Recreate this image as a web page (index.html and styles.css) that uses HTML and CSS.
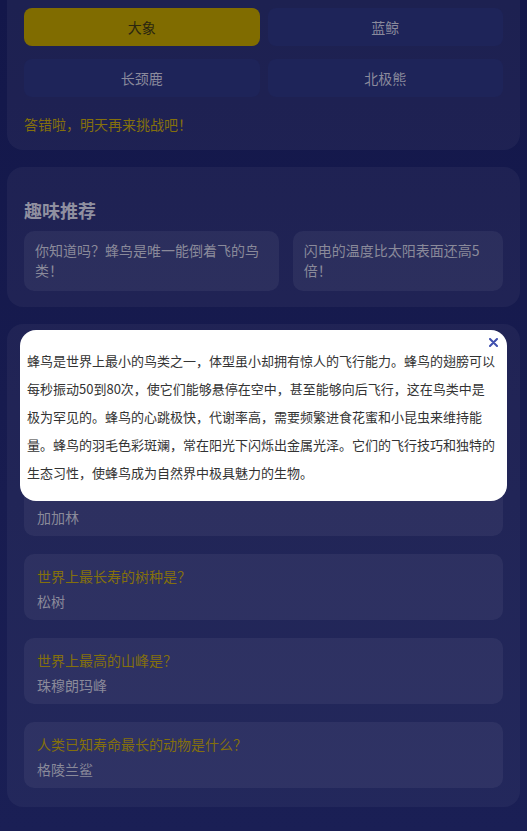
FILE: index.html
```html
<!DOCTYPE html>
<html lang="zh-CN">
<head>
    <meta charset="UTF-8">
    <meta name="viewport" content="width=device-width, initial-scale=1.0">
    <title>每日动物问答</title>
    <link rel="stylesheet" href="styles.css">
</head>
<body>
    <div class="page">
        <section class="card card-top">
            <div class="options">
                <button class="option selected">大象</button>
                <button class="option">蓝鲸</button>
                <button class="option">长颈鹿</button>
                <button class="option">北极熊</button>
            </div>
            <p class="result">答错啦，明天再来挑战吧！</p>
        </section>

        <section class="card">
            <h2 class="card-title">趣味推荐</h2>
            <div class="tips">
                <div class="tip">你知道吗？蜂鸟是唯一能倒着飞的鸟类！</div>
                <div class="tip">闪电的温度比太阳表面还高5倍！</div>
            </div>
        </section>

        <section class="card card-history">
            <h2 class="card-title tight">往期问答</h2>
            <div class="history">
                <div class="qa">
                    <p class="q">世界上最大的沙漠是？</p>
                    <p class="a">南极洲</p>
                </div>
                <div class="qa">
                    <p class="q">第一位进入太空的人是谁？</p>
                    <p class="a">加加林</p>
                </div>
                <div class="qa">
                    <p class="q">世界上最长寿的树种是？</p>
                    <p class="a">松树</p>
                </div>
                <div class="qa">
                    <p class="q">世界上最高的山峰是？</p>
                    <p class="a">珠穆朗玛峰</p>
                </div>
                <div class="qa">
                    <p class="q">人类已知寿命最长的动物是什么？</p>
                    <p class="a">格陵兰鲨</p>
                </div>
            </div>
        </section>
    </div>

    <!-- tip detail popup -->
    <div class="modal-layer">
        <div class="modal">
            <button class="modal-close" aria-label="关闭">
                <svg width="9" height="9" viewBox="0 0 9 9">
                    <path d="M1 1 L8 8 M8 1 L1 8" stroke="#3f4fae" stroke-width="2" stroke-linecap="round"/>
                </svg>
            </button>
            <p>蜂鸟是世界上最小的鸟类之一，体型虽小却拥有惊人的飞行能力。蜂鸟的翅膀可以每秒振动50到80次，使它们能够悬停在空中，甚至能够向后飞行，这在鸟类中是极为罕见的。蜂鸟的心跳极快，代谢率高，需要频繁进食花蜜和小昆虫来维持能量。蜂鸟的羽毛色彩斑斓，常在阳光下闪烁出金属光泽。它们的飞行技巧和独特的生态习性，使蜂鸟成为自然界中极具魅力的生物。</p>
        </div>
    </div>
</body>
</html>
```

FILE: styles.css
```css
body {
    margin: 0;
    min-height: 100vh;
    font-family: "Noto Sans CJK SC", "Noto Sans", sans-serif;
    background: linear-gradient(180deg, #13174a 0%, #181c50 60%, #1a1f55 100%);
}
.page {
    padding: 0 7px;
}
.card {
    background-color: rgba(255, 255, 255, 0.045);
    border-radius: 16px;
    padding: 17px 17px 16px;
    margin-bottom: 17px;
}
.card-top {
    padding-top: 8px;
    border-radius: 0 0 16px 16px;
}
.card-history {
    padding-bottom: 19px;
}
.options {
    display: grid;
    grid-template-columns: 1fr 1fr;
    column-gap: 8px;
    row-gap: 13px;
}
.option {
    height: 38px;
    border: none;
    border-radius: 8px;
    background-color: #1e2459;
    color: #8a8a9c;
    font-family: inherit;
    font-size: 14px;
    cursor: pointer;
}
.option.selected {
    background-color: #806c00;
    color: #2a2610;
}
.result {
    margin: 17px 0 0;
    font-size: 14px;
    line-height: 20px;
    color: #85700c;
}
.card-title {
    margin: 12.7px 0 8px;
    font-size: 18px;
    line-height: 26px;
    font-weight: bold;
    color: #9090a0;
}
.card-title.tight {
    margin-bottom: 6px;
}
.tips {
    display: flex;
    gap: 14px;
}
.tip {
    flex: 1 1 auto;
    padding: 10.5px 11px;
    border-radius: 10px;
    background-color: rgba(255, 255, 255, 0.055);
    color: #8a8a9a;
    font-size: 14px;
    line-height: 1.4;
}
.history {
    display: flex;
    flex-direction: column;
    gap: 18px;
}
.qa {
    padding: 12px 13px 9px;
    border-radius: 10px;
    background-color: rgba(255, 255, 255, 0.055);
}
.qa p {
    margin: 0;
    font-size: 14px;
    line-height: 20px;
}
.qa .q {
    margin-bottom: 5px;
    color: #84700c;
}
.qa .a {
    color: #8a8a9a;
}
.modal-layer {
    position: fixed;
    inset: 0;
    display: flex;
    align-items: center;
    justify-content: center;
}
.modal {
    position: relative;
    width: calc(100% - 40px);
    box-sizing: border-box;
    padding: 17px 11px 14px 7px;
    background-color: #fff;
    border-radius: 16px;
}
.modal p {
    margin: 0;
    font-size: 13px;
    line-height: 28px;
    color: #333;
}
.modal-close {
    position: absolute;
    top: 8px;
    right: 9px;
    padding: 0;
    border: none;
    background: none;
    line-height: 0;
    cursor: pointer;
}
```
